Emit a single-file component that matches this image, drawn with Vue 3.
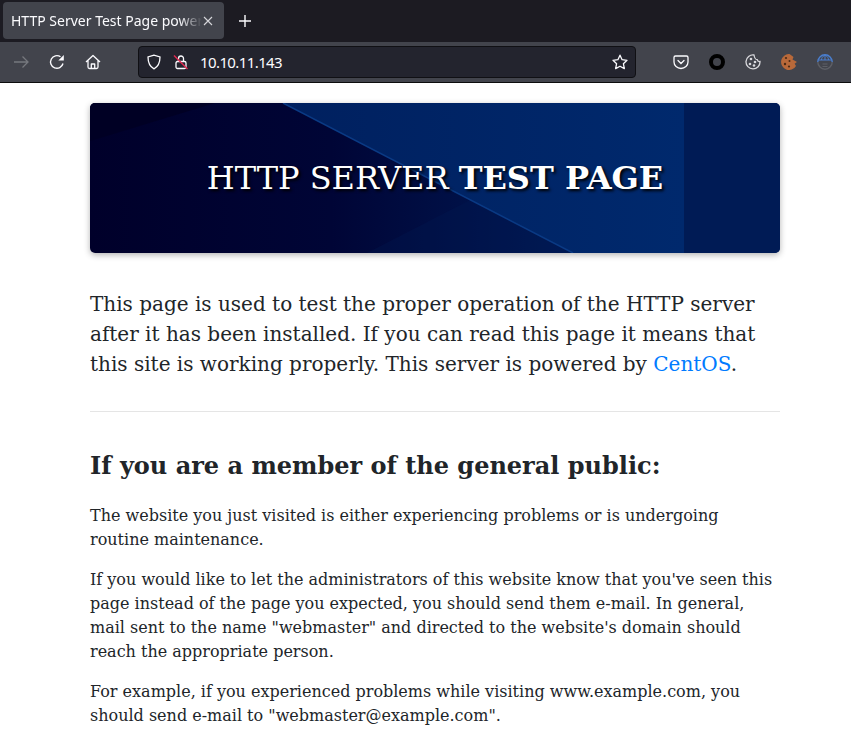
<script setup>
const paragraphs = [
  'The website you just visited is either experiencing problems or is undergoing routine maintenance.',
  'If you would like to let the administrators of this website know that you\'ve seen this page instead of the page you expected, you should send them e-mail. In general, mail sent to the name "webmaster" and directed to the website\'s domain should reach the appropriate person.',
  'For example, if you experienced problems while visiting www.example.com, you should send e-mail to "webmaster@example.com".'
]
</script>

<template>
  <div class="window">
    <div class="tabbar">
      <div class="tab">
        <span class="tab-title">HTTP Server Test Page powered by CentOS</span>
        <svg class="tab-close" width="10" height="10" viewBox="0 0 10 10"><path d="M1 1l8 8M9 1l-8 8" stroke="#d6d6da" stroke-width="1.1" /></svg>
      </div>
      <svg class="new-tab" width="14" height="14" viewBox="0 0 14 14"><path d="M7 1v12M1 7h12" stroke="#fbfbfe" stroke-width="1.4" /></svg>
    </div>
    <div class="navbar">
      <div class="nav-buttons">
        <svg width="16" height="16" viewBox="0 0 16 16" fill="none" stroke="#76787e" stroke-width="1.3"><path d="M1 8h14M9.500 2.500L15 8l-5.500 5.500" /></svg>
        <svg width="16" height="16" viewBox="0 0 16 16" fill="none" stroke="#fbfbfe" stroke-width="1.4"><path d="M14 9.500A6.300 6.300 0 1 1 11.500 2.800" /><path d="M14.800 1v5.500H9.300" stroke="none" fill="#fbfbfe" /></svg>
        <svg width="16" height="16" viewBox="0 0 16 16" fill="none" stroke="#fbfbfe" stroke-width="1.3" stroke-linejoin="round"><path d="M1 8l7-6.500L15 8M3 6.500V13a1.500 1.500 0 0 0 1.500 1.500h7A1.500 1.500 0 0 0 13 13V6.500M6.300 14.500V10h3.400v4.500" /></svg>
      </div>
      <div class="urlbar">
        <svg width="16" height="16" viewBox="0 0 16 16" fill="none" stroke="#fbfbfe" stroke-width="1.3"><path d="M8 1.200L2 3c0 6 1.500 9.500 6 11.800C12.500 12.500 14 9 14 3z" /></svg>
        <svg class="lock" width="16" height="16" viewBox="0 0 16 16" fill="none"><rect x="3" y="7.500" width="10" height="7" rx="1.500" stroke="#fbfbfe" stroke-width="1.300" /><path d="M5.500 7.500V4.500a2.500 2.500 0 0 1 5 0v3" stroke="#fbfbfe" stroke-width="1.300" /><path d="M1 1.500L14.500 15" stroke="#e22850" stroke-width="1.400" /></svg>
        <span class="url">10.10.11.143</span>
        <svg class="star" width="16" height="16" viewBox="0 0 16 16" fill="none" stroke="#fbfbfe" stroke-width="1.300" stroke-linejoin="round"><path d="M8 1.200l2.100 4.500 4.900.6-3.600 3.400.95 4.900L8 12.200 3.650 14.600l.95-4.900L1 6.300l4.900-.6z" /></svg>
      </div>
      <div class="extensions">
        <svg width="16" height="16" viewBox="0 0 16 16" fill="none" stroke="#fbfbfe" stroke-width="1.300"><path d="M2.500 2h11A1.500 1.500 0 0 1 15 3.500V8a7 6.500 0 0 1-14 0V3.500A1.500 1.500 0 0 1 2.500 2z" /><path d="M5 6.500l3 3 3-3" stroke-linecap="round" /></svg>
        <span class="ring"></span>
        <svg width="16" height="16" viewBox="0 0 16 16" fill="none"><path d="M9 1a7 7 0 1 0 6 6.500c-1.500.3-2.500-.5-2.800-1.800C10.700 5.800 9.300 3.200 9 1z" stroke="#d8d8dc" stroke-width="1.300" /><circle cx="6" cy="5" r="1.300" fill="#d8d8dc" /><circle cx="10" cy="8" r="1.300" fill="#d8d8dc" /><circle cx="5" cy="10" r="1.300" fill="#d8d8dc" /><circle cx="9" cy="11.500" r="1.300" fill="#d8d8dc" /></svg>
        <svg width="16" height="16" viewBox="0 0 16 16"><path d="M8.500 0A8 8 0 1 0 15 12l-1.500-2.500L16 8l-4.500-2.500 1-2.500z" fill="#b8693a" /><circle cx="5" cy="4" r="1.100" fill="#4a2a14" /><circle cx="4" cy="10" r="1.200" fill="#4a2a14" /><circle cx="8" cy="12.500" r="1.100" fill="#4a2a14" /><circle cx="8.500" cy="7" r="1" fill="#4a2a14" /><circle cx="13.500" cy="8.500" r="1.100" fill="#b8693a" /></svg>
        <svg width="16" height="16" viewBox="0 0 16 16" fill="none"><path d="M.8 8a7.200 7.200 0 0 1 14.400 0" stroke="#4a7fd0" stroke-width="1.400" /><path d="M.8 6h14.400M8 1v5M4.500 6c0-2 1-3.500 3.500-5M11.500 6c0-2-1-3.500-3.500-5" stroke="#4a7fd0" stroke-width="1" /><path d="M.8 8a7.200 7.200 0 0 0 14.400 0" stroke="#5d5f66" stroke-width="1.400" /><path d="M5.500 10h5M5.500 12.500h5" stroke="#5d5f66" stroke-width="1" /></svg>
      </div>
    </div>
    <main class="page">
      <div class="container">
        <header class="jumbo">
          <svg class="jumbo-art" viewBox="0 0 690 150" preserveAspectRatio="none">
            <defs>
              <linearGradient id="base" x1="0" x2="1" y1="0" y2="0">
                <stop offset="0" stop-color="#00002a" />
                <stop offset="0.35" stop-color="#000536" />
                <stop offset="0.7" stop-color="#001a55" />
                <stop offset="1" stop-color="#001f5e" />
              </linearGradient>
              <linearGradient id="bright" x1="0" x2="1" y1="0" y2="0">
                <stop offset="0" stop-color="#00205f" />
                <stop offset="1" stop-color="#00296d" />
              </linearGradient>
            </defs>
            <rect width="690" height="150" fill="url(#base)" />
            <path d="M0 38L125 0H0z" fill="#000024" />
            <path d="M277 150L380 97 483 150z" fill="#001b52" opacity=".3" />
            <path d="M193 0H594V150H483z" fill="url(#bright)" />
            <path d="M594 0H690V150H594z" fill="#001b55" />
            <path d="M193 0L483 150" fill="none" stroke="#0a3a84" stroke-width="1.500" />
          </svg>
          <h1 class="jumbo-title">HTTP SERVER <strong>TEST PAGE</strong></h1>
        </header>
        <p class="lead">This page is used to test the proper operation of the HTTP server after it has been installed. If you can read this page it means that this site is working properly. This server is powered by <a class="link" href="#">CentOS</a>.</p>
        <hr class="rule" />
        <h2 class="heading">If you are a member of the general public:</h2>
        <p v-for="p in paragraphs" :key="p" class="body">{{ p }}</p>
      </div>
    </main>
  </div>
</template>

<style scoped>
.window { width: 851px; height: 734px; overflow: hidden; background: #fff; display: flex; flex-direction: column; }
.tabbar { height: 42px; box-sizing: border-box; background: #1c1b22; display: flex; align-items: center; padding: 2px 0 3px 3px; flex: none; }
.tab { width: 221px; height: 37px; background: #42444c; border-radius: 4px; display: flex; align-items: center; padding: 0 11px 0 8px; box-sizing: border-box; gap: 1px; }
.tab-title { flex: 1; min-width: 0; white-space: nowrap; overflow: hidden; font: 14px "Noto Sans", sans-serif; color: #fbfbfe; -webkit-mask-image: linear-gradient(to right, #000 88%, transparent); mask-image: linear-gradient(to right, #000 88%, transparent); }
.new-tab { margin-left: 14px; }
.navbar { height: 41px; box-sizing: border-box; background: #42444c; display: flex; align-items: center; flex: none; border-bottom: 1px solid #0c0c0d; }
.nav-buttons { display: flex; gap: 20px; padding-left: 13px; width: 124px; box-sizing: border-box; }
.urlbar { width: 498px; height: 32px; box-sizing: border-box; margin-left: 14px; background: #23242e; border: 1px solid #101014; border-radius: 4px; display: flex; align-items: center; padding: 0 7px; }
.lock { margin-left: 11px; }
.url { margin-left: 11px; flex: 1; font: 15px "Noto Sans", sans-serif; letter-spacing: -0.6px; color: #fbfbfe; }
.extensions { display: flex; align-items: center; gap: 20px; margin-left: 37px; }
.ring { width: 16px; height: 16px; box-sizing: border-box; border: 4px solid #000; border-radius: 50%; }
.page { flex: 1; min-height: 0; overflow: hidden; background: #fff; }
.container { width: 690px; margin-left: 90px; padding-top: 20px; font-family: "DejaVu Serif", serif; color: #212529; }
.jumbo { position: relative; height: 150px; border-radius: 5px; overflow: hidden; box-shadow: 0 2px 6px rgba(0,0,0,.3); display: flex; align-items: center; justify-content: center; }
.jumbo-art { position: absolute; inset: 0; width: 100%; height: 100%; }
.jumbo-title { position: relative; margin: 0; font-size: 32px; font-weight: 400; line-height: 1.2; color: #fff; text-shadow: 2px 2px 3px #000; }
.jumbo-title strong { font-weight: 700; }
.lead { margin: 36px 0 0; font-size: 20px; line-height: 30px; }
.link { color: #007bff; text-decoration: none; }
.rule { margin: 32px 0 0; border: 0; border-top: 1px solid #e5e5e5; }
.heading { margin: 39px 0 0; font-size: 24px; line-height: 29px; font-weight: 700; }
.body { margin: 0 0 16px; font-size: 16px; line-height: 24px; }
.heading + .body { margin-top: 24px; }
</style>
